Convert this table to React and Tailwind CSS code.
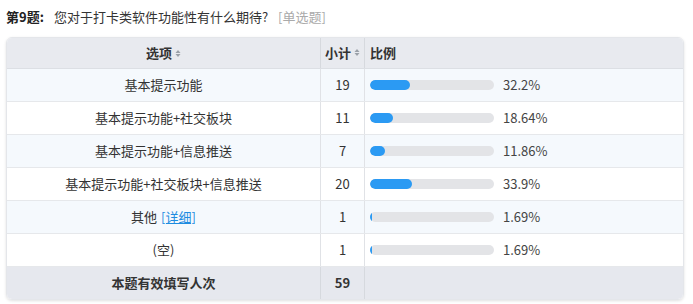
import React from 'react'

const rows = [
  { label: '基本提示功能', count: 19, pct: 32.2 },
  { label: '基本提示功能+社交板块', count: 11, pct: 18.64 },
  { label: '基本提示功能+信息推送', count: 7, pct: 11.86 },
  { label: '基本提示功能+社交板块+信息推送', count: 20, pct: 33.9 },
  { label: '其他', count: 1, pct: 1.69, detail: true },
  { label: '(空)', count: 1, pct: 1.69 },
]

function SortIcon() {
  return (
    <svg width="6" height="9" viewBox="0 0 6 9" className="inline-block ml-[3px] -mt-[2px]">
      <path d="M3 1 L5.5 4 H0.5 Z" fill="#9aa0a8" />
      <path d="M3 8 L5.5 5 H0.5 Z" fill="#9aa0a8" />
    </svg>
  )
}

export default function App() {
  return (
    <div
      className="w-[693px] h-[304px] bg-white text-[13px] text-[#333]"
      style={{ fontFamily: '"Noto Sans CJK SC", "Noto Sans", sans-serif' }}
    >
      <div className="flex items-center h-[34px] pl-[6px]">
        <span className="font-bold text-[#222]">第9题:</span>
        <span className="ml-[10px]">您对于打卡类软件功能性有什么期待?</span>
        <span className="ml-[10px] text-[#aaa]">[单选题]</span>
      </div>

      <div className="mx-[6px] mt-[3px] w-[678px] rounded-[6px] border border-[#e4e6ea] shadow-[0_1px_3px_rgba(0,0,0,0.12)] overflow-hidden">
        <div className="flex h-[31px] bg-[#e8eaef] font-bold text-[#333] items-center border-b border-[#dcdfe4]">
          <div className="w-[313px] text-center">选项<SortIcon /></div>
          <div className="w-[44px] text-center h-full flex items-center justify-center border-l border-[#d6d9de]">小计<SortIcon /></div>
          <div className="flex-1 h-full flex items-center pl-[5px] border-l border-[#d6d9de]">比例</div>
        </div>

        {rows.map((r, i) => (
          <div
            key={i}
            className={`flex h-[33px] items-center border-b border-[#e6e8eb] ${i % 2 === 0 ? 'bg-[#f5f9fd]' : 'bg-white'}`}
          >
            <div className="w-[313px] text-center">
              {r.label}
              {r.detail && <span className="ml-[4px] text-[#1e8ce0] underline">[详细]</span>}
            </div>
            <div className="w-[44px] h-full flex items-center justify-center border-l border-[#e0e2e6]">{r.count}</div>
            <div className="flex-1 h-full flex items-center pl-[5px] border-l border-[#e0e2e6]">
              <div className="w-[124px] h-[10px] rounded-full bg-[#e3e4e7] overflow-hidden">
                <div
                  className="h-full rounded-full bg-[#2b9af3]"
                  style={{ width: `${Math.max(r.pct * 1.24, 2)}px` }}
                />
              </div>
              <span className="ml-[9px] text-[#444]">{r.pct}%</span>
            </div>
          </div>
        ))}

        <div className="flex h-[32px] items-center bg-[#e6e8ee] font-bold text-[#333]">
          <div className="w-[313px] text-center">本题有效填写人次</div>
          <div className="w-[44px] h-full flex items-center justify-center border-l border-[#d6d9de]">59</div>
          <div className="flex-1 h-full border-l border-[#d6d9de]" />
        </div>
      </div>
    </div>
  )
}
